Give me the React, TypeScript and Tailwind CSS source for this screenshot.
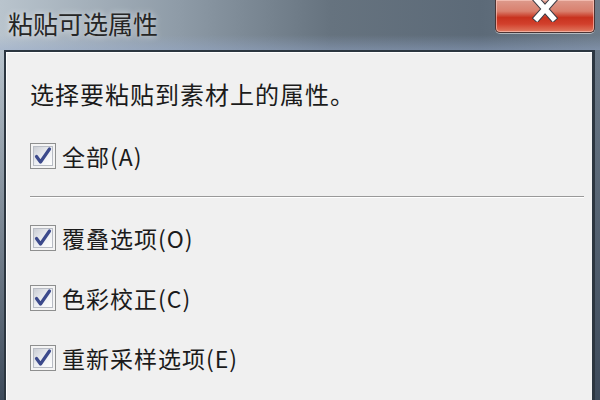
import type { ReactNode } from 'react';

const font = { fontFamily: '"Noto Sans CJK SC", "Noto Sans", sans-serif' };

function CheckBox() {
  return (
    <svg width="26" height="26" viewBox="0 0 26 26" className="shrink-0">
      <defs>
        <linearGradient id="cbfill" x1="0" y1="0" x2="1" y2="1">
          <stop offset="0" stopColor="#c9ccd2" />
          <stop offset="0.5" stopColor="#eceef2" />
          <stop offset="1" stopColor="#ffffff" />
        </linearGradient>
      </defs>
      <rect x="0.5" y="0.5" width="25" height="25" fill="#f4f4f4" stroke="#8e8f8f" />
      <rect x="3.5" y="3.5" width="19" height="19" fill="url(#cbfill)" stroke="#b8bcc4" />
      <path d="M6.5 13.5 L10.5 19 L19.5 6" fill="none" stroke="#3c4a8c" strokeWidth="3.2" strokeLinejoin="round" strokeLinecap="round" />
    </svg>
  );
}

function Option({ children }: { children: ReactNode }) {
  return (
    <div className="flex items-center gap-[6px] h-[26px]">
      <CheckBox />
      <span className="text-[23px] leading-none text-[#1b1b1b] tracking-[1px]">{children}</span>
    </div>
  );
}

function CloseButton() {
  return (
    <div className="absolute right-[5px] top-0 w-[100px] h-[33px] rounded-b-[5px] border border-t-0 border-[#4a3434] bg-[linear-gradient(to_bottom,#dd9a8c_0%,#d9806e_35%,#c8321e_55%,#d2402c_75%,#e07a60_100%)] shadow-[inset_0_0_0_1px_rgba(255,210,200,0.6),0_1px_0_rgba(255,255,255,0.5)] flex justify-center">
      <svg width="26" height="24" viewBox="0 0 26 24" className="-mt-[2px]">
        <path d="M5 2 L21 20 M21 2 L5 20" stroke="#3a3a44" strokeWidth="7.5" strokeLinecap="square" />
        <path d="M5 2 L21 20 M21 2 L5 20" stroke="#ffffff" strokeWidth="5.5" strokeLinecap="square" />
      </svg>
    </div>
  );
}

export default function App() {
  return (
    <div
      className="relative w-[600px] h-[400px] overflow-hidden flex flex-col bg-[linear-gradient(to_right,#b9c4cd_0%,#8e9ba7_30%,#66737f_55%,#5c6a78_80%,#6c7a88_100%)]"
      style={font}
    >
      {/* title bar */}
      <div className="h-[50px] shrink-0 flex items-center pl-[8px] pb-[4px] bg-[linear-gradient(to_bottom,rgba(255,255,255,0)_0%,rgba(255,255,255,0)_70%,rgba(150,170,205,0.45)_100%)]">
        <span className="text-[25px] leading-none text-[#262626] [text-shadow:0_0_6px_rgba(255,255,255,0.8)]">粘贴可选属性</span>
      </div>
      <CloseButton />

      {/* window body */}
      <div className="flex-1 flex pl-[4px] pr-[5px] bg-[linear-gradient(to_bottom,transparent,#3d4a5a)]">
        <div className="flex-1 border-l-2 border-t-2 border-r-[3px] border-[#2c3640] bg-[#f0f0f0] shadow-[inset_1px_1px_0_#ffffff]">
          <div className="pl-[24px] pr-[8px]">
            <div className="pt-[30px] text-[24px] leading-none text-[#1b1b1b] tracking-[1px]">选择要粘贴到素材上的属性。</div>

            <div className="mt-[37px]">
              <Option>全部(A)</Option>
            </div>

            <div className="mt-[27px] h-[2px] bg-[#999999] border-b border-white" />

            <div className="mt-[27px] flex flex-col gap-[34px]">
              <Option>覆叠选项(O)</Option>
              <Option>色彩校正(C)</Option>
              <Option>重新采样选项(E)</Option>
            </div>
          </div>
        </div>
      </div>
    </div>
  );
}
